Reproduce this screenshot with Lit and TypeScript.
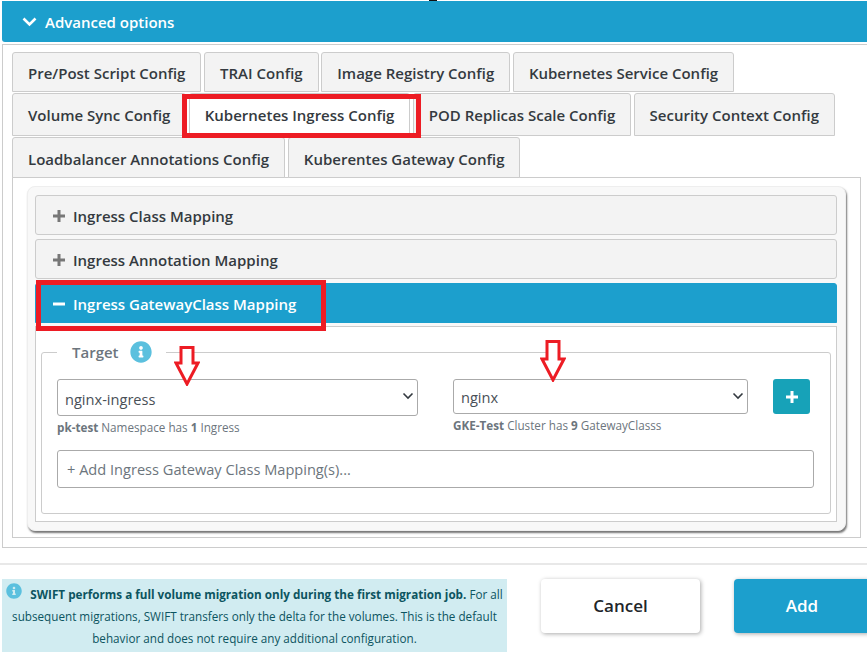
import { LitElement, html, css, svg } from 'lit';
import { customElement } from 'lit/decorators.js';

const infoPath =
  'M256 8C119.043 8 8 119.083 8 256c0 136.997 111.043 248 248 248s248-111.003 248-248C504 119.083 392.957 8 256 8zm0 110c23.196 0 42 18.804 42 42s-18.804 42-42 42-42-18.804-42-42 18.804-42 42-42zm56 254c0 6.627-5.373 12-12 12h-88c-6.627 0-12-5.373-12-12v-24c0-6.627 5.373-12 12-12h12v-64h-12c-6.627 0-12-5.373-12-12v-24c0-6.627 5.373-12 12-12h64c6.627 0 12 5.373 12 12v100h12c6.627 0 12 5.373 12 12v24z';

const tabRows = [
  ['Pre/Post Script Config', 'TRAI Config', 'Image Registry Config', 'Kubernetes Service Config'],
  ['Volume Sync Config', 'Kubernetes Ingress Config', 'POD Replicas Scale Config', 'Security Context Config'],
  ['Loadbalancer Annotations Config', 'Kuberentes Gateway Config'],
];

const infoIcon = (size: number) =>
  html`<svg class="info" width=${size} height=${size} viewBox="0 0 512 512">
    ${svg`<path fill="#5bc0de" d=${infoPath} />`}
  </svg>`;

const chevron = html`<svg class="chev" width="12" height="8" viewBox="0 0 12 8">
  <polyline points="1.5,1.5 6,6 10.5,1.5" fill="none" stroke="#343a40" stroke-width="1.6" />
</svg>`;

const arrow = (left: number, top: number, h: number) =>
  html`<svg class="arrow" style="left:${left}px;top:${top}px" width="26" height=${h} viewBox="0 0 26 ${h}">
    <path
      d="M7 1.5 H19 V${h - 23} H24 L13 ${h - 2} L2 ${h - 23} H7 Z"
      fill="#fff"
      stroke="#ed1c24"
      stroke-width="3"
    />
  </svg>`;

@customElement('app-root')
class AppRoot extends LitElement {
  static styles = css`
    :host {
      display: block;
      position: relative;
      width: 867px;
      height: 656px;
      overflow: hidden;
      background: #fff;
      font-family: 'Open Sans', sans-serif;
      color: #343a40;
    }

    .page {
      width: 872px;
      padding-top: 1px;
    }

    .banner {
      display: flex;
      align-items: center;
      gap: 8px;
      height: 41px;
      margin-left: 2px;
      padding-left: 20px;
      box-sizing: border-box;
      background: #1c9fcd;
      border-radius: 0 0 0 3px;
      color: #fff;
      font-size: 15px;
      font-weight: 600;
    }

    .outer {
      margin: 2px 0 0 2px;
      padding: 7px 9px 9px;
      border: 1px solid #ccc;
      height: 504px;
      box-sizing: border-box;
    }

    .tabs {
      display: grid;
      grid-template-rows: 40px 43px 41px;
      row-gap: 1px;
    }

    .tab-row {
      display: flex;
      gap: 2.7px;
    }

    .tab-row.tight {
      gap: 2.4px;
    }

    .tab {
      display: flex;
      align-items: center;
      padding: 2px 15px 0;
      box-sizing: border-box;
      border: 1px solid #ccc;
      border-radius: 3px 3px 0 0;
      background: #f3f3f3;
      font-size: 15px;
      font-weight: 600;
      white-space: nowrap;
    }

    .tight .tab {
      padding-top: 0;
    }

    .tab.active {
      background: #fff;
    }

    .tab-body {
      width: 849px;
      height: 361px;
      margin-top: -1px;
      padding: 8px 14px 6px;
      box-sizing: border-box;
      border: 1px solid #ccc;
    }

    .card {
      display: flex;
      flex-direction: column;
      gap: 4px;
      height: 345px;
      padding: 8px 8px 8px 7px;
      box-sizing: border-box;
      border: 1px solid #eee;
      border-radius: 8px;
      background: #f8f8f8;
      box-shadow: 1px 2px 2px #777;
    }

    .acc {
      display: flex;
      flex: none;
      align-items: center;
      gap: 8px;
      height: 40px;
      padding: 2px 0 0 17px;
      box-sizing: border-box;
      border: 1px solid #ccc;
      border-radius: 3px;
      background: #f3f3f3;
      font-size: 15px;
      font-weight: 600;
    }

    .acc.open {
      border-color: #1c9fcd;
      border-radius: 3px 3px 0 0;
      background: #1c9fcd;
      color: #fff;
      margin-bottom: -4px;
    }

    .panel {
      flex: none;
      height: 196px;
      padding: 13px 5px 0;
      box-sizing: border-box;
      margin-top: 3px;
      background: #fff;
      border: 1px solid #ccc;
    }

    fieldset {
      margin: 0;
      padding: 15px 15px 0;
      height: 174px;
      box-sizing: border-box;
      border: 1px solid #ccc;
      border-radius: 3px;
    }

    legend {
      display: flex;
      align-items: center;
      gap: 11px;
      height: 24px;
      padding: 0 14px 0 15px;
      color: #6c757d;
      font-size: 15px;
      font-weight: 600;
    }

    .info {
      display: block;
    }

    .pickers {
      display: flex;
      align-items: flex-start;
    }

    .picker {
      display: flex;
      flex-direction: column;
    }

    .picker.source {
      width: 361px;
      margin-right: 35px;
    }

    .picker.dest {
      width: 295px;
      margin-right: 25px;
    }

    .select-box {
      position: relative;
    }

    select {
      display: block;
      width: 100%;
      padding: 0 24px 0 7px;
      box-sizing: border-box;
      appearance: none;
      background: #fff;
      border: 1px solid #aaa;
      border-radius: 3px;
      color: #495057;
      font-family: inherit;
      font-size: 14.6px;
    }

    .source select {
      height: 37px;
      padding-top: 2px;
    }

    .dest select {
      height: 35px;
      padding-top: 1px;
    }

    .chev {
      position: absolute;
      right: 4px;
      top: 13px;
    }

    .hint {
      margin-top: 4px;
      color: #6c757d;
      font-size: 11.7px;
      line-height: 15px;
    }

    .add-small {
      display: flex;
      align-items: center;
      justify-content: center;
      width: 37px;
      height: 35px;
      padding: 0;
      border: 0;
      border-radius: 3px;
      background: #17a2b8;
    }

    input {
      display: block;
      width: 757px;
      height: 38px;
      margin-top: 15px;
      padding: 0 9px;
      box-sizing: border-box;
      border: 1px solid #aaa;
      border-radius: 3px;
      font-family: inherit;
      font-size: 14.6px;
    }

    input::placeholder {
      color: #6c757d;
      opacity: 1;
    }

    .footer {
      display: flex;
      align-items: flex-start;
      margin-top: 15px;
      padding-top: 14px;
      border-top: 2px solid #e8e8e8;
    }

    .alert {
      width: 505px;
      height: 73px;
      margin-left: 2px;
      padding-top: 4px;
      box-sizing: border-box;
      background: #d1ecf1;
      color: #0c5460;
      font-size: 11.7px;
      line-height: 22px;
      text-align: center;
    }

    .alert .info {
      display: inline-block;
      vertical-align: -1px;
      margin: 0 8px 0 0;
      position: relative;
      top: -1px;
    }

    .actions {
      display: flex;
      gap: 34px;
      margin-left: 34px;
    }

    .btn {
      height: 54px;
      padding: 0 0 2px;
      border: 0;
      border-radius: 4px;
      font-family: inherit;
      font-size: 17px;
      font-weight: 600;
      box-shadow: 1px 1px 4px #aaa;
    }

    .btn.cancel {
      width: 159px;
      background: #fff;
      color: #212529;
    }

    .btn.add {
      width: 136px;
      background: #1c9fcd;
      color: #fff;
    }

    .mark {
      position: absolute;
      box-sizing: border-box;
      border: 5px solid #ed1c24;
    }

    .arrow {
      position: absolute;
    }

    .speck {
      position: absolute;
      left: 429px;
      top: 0;
      width: 8px;
      height: 1px;
      background: #111;
    }
  `;

  render() {
    return html`<div class="page">
        <div class="banner">
          <svg width="15" height="10" viewBox="0 0 15 10">
            <polyline points="1.5,1.5 7.5,7.5 13.5,1.5" fill="none" stroke="#fff" stroke-width="2.6" />
          </svg>
          Advanced options
        </div>
        <div class="outer">
          <div class="tabs">
            ${tabRows.map(
              (row, r) => html`<div class="tab-row ${r === 1 ? 'tight' : ''}">
                ${row.map(
                  (t) =>
                    html`<div class="tab ${t === 'Kubernetes Ingress Config' ? 'active' : ''}">${t}</div>`
                )}
              </div>`
            )}
          </div>
          <div class="tab-body">
            <div class="card">
              ${this.accordion('Ingress Class Mapping', false)}
              ${this.accordion('Ingress Annotation Mapping', false)}
              ${this.accordion('Ingress GatewayClass Mapping', true)}
              <div class="panel">
                <fieldset>
                  <legend>Target ${infoIcon(22)}</legend>
                  <div class="pickers">
                    <div class="picker source">
                      <div class="select-box">
                        <select><option>nginx-ingress</option></select>
                        ${chevron}
                      </div>
                      <div class="hint"><b>pk-test</b> Namespace has <b>1</b> Ingress</div>
                    </div>
                    <div class="picker dest">
                      <div class="select-box">
                        <select><option>nginx</option></select>
                        ${chevron}
                      </div>
                      <div class="hint"><b>GKE-Test</b> Cluster has <b>9</b> GatewayClasss</div>
                    </div>
                    <button class="add-small" type="button">
                      <svg width="14" height="14" viewBox="0 0 14 14">
                        <path d="M7 1V13M1 7H13" stroke="#fff" stroke-width="3" />
                      </svg>
                    </button>
                  </div>
                  <input placeholder="+ Add Ingress Gateway Class Mapping(s)..." />
                </fieldset>
              </div>
            </div>
          </div>
        </div>
        <div class="footer">
          <div class="alert">
            ${infoIcon(16)}<b>SWIFT performs a full volume migration only during the first migration job.</b>
            For all subsequent migrations, SWIFT transfers only the delta for the volumes. This is the
            default behavior and does not require any additional configuration.
          </div>
          <div class="actions">
            <button class="btn cancel" type="button">Cancel</button>
            <button class="btn add" type="button">Add</button>
          </div>
        </div>
      </div>
      <div class="speck"></div>
      <div class="mark" style="left:182px;top:94px;width:239px;height:44px"></div>
      <div class="mark" style="left:36px;top:280px;width:290px;height:51px"></div>
      ${arrow(174, 346, 40)} ${arrow(540, 340, 42)}`;
  }

  private accordion(label: string, open: boolean) {
    return html`<div class="acc ${open ? 'open' : ''}">
      <svg width="12" height="12" viewBox="0 0 12 12">
        <path
          d=${open ? 'M0 6H12' : 'M6 0V12M0 6H12'}
          stroke=${open ? '#fff' : '#777'}
          stroke-width="3"
        />
      </svg>
      ${label}
    </div>`;
  }
}
